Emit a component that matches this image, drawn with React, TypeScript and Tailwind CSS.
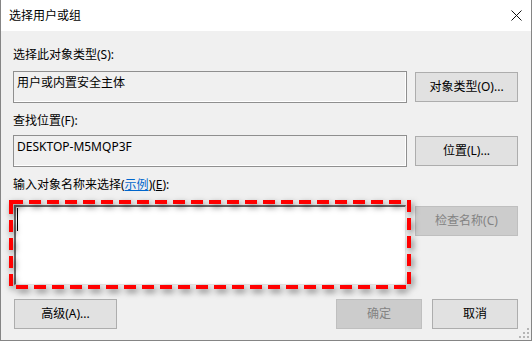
import React from 'react';

const font = { fontFamily: '"Noto Sans", "Noto Sans CJK SC", sans-serif' };

const Button = ({ label, disabled, className = '' }: { label: React.ReactNode; disabled?: boolean; className?: string }) => (
  <div
    className={`h-[30px] flex items-center justify-center text-[12px] border ${
      disabled ? 'bg-[#cccccc] border-[#bfbfbf] text-[#838383]' : 'bg-[#e1e1e1] border-[#adadad] text-[#000000]'
    } ${className}`}
  >
    {label}
  </div>
);

const ReadOnlyBox = ({ value }: { value: string }) => (
  <div className="flex-1 h-[32px] border border-[#8f8f8f] shadow-[inset_-1px_-1px_0_#ffffff] bg-[#f0f0f0] px-[3px] pt-[3px] text-[12px] leading-[16px] text-black">
    {value}
  </div>
);

export default function App() {
  return (
    <div className="w-[532px] h-[342px] bg-white" style={font}>
      <div className="w-[532px] h-[341px] border-x border-b border-[#858585] bg-[#f0f0f0] flex flex-col relative">
        {/* Title bar */}
        <div className="h-[31px] bg-white flex items-center justify-between pl-[8px] pr-[9px]">
          <span className="text-[12px] text-black">选择用户或组</span>
          <svg width="11" height="11" viewBox="0 0 11 11">
            <path d="M0.5 0.5 L10.5 10.5 M10.5 0.5 L0.5 10.5" stroke="#111" strokeWidth="1" />
          </svg>
        </div>

        <div className="flex flex-col pl-[12px] pr-[13px] text-[12px] leading-[16px] text-black">
          <div className="mt-[16px]">选择此对象类型(S):</div>
          <div className="mt-[8px] flex gap-[8px]">
            <ReadOnlyBox value="用户或内置安全主体" />
            <Button label="对象类型(O)..." className="w-[103px] mt-[1px]" />
          </div>

          <div className="mt-[10px]">查找位置(F):</div>
          <div className="mt-[6px] flex gap-[8px]">
            <ReadOnlyBox value="DESKTOP-M5MQP3F" />
            <Button label="位置(L)..." className="w-[103px] mt-[1px]" />
          </div>

          <div className="mt-[10px]">
            输入对象名称来选择(<span className="text-[#0066cc] underline">示例</span>)(<span className="underline">E</span>):
          </div>
          <div className="mt-[12px] flex gap-[9px]">
            <div className="relative flex-1">
              <div className="h-[80px] ml-[1px] bg-white border-t-2 border-l-2 border-[#6d6d6d] border-r border-b border-r-[#e6e6e6] border-b-[#e6e6e6] pl-[1px] pt-[1px]">
                <div className="w-[1px] h-[23px] bg-black" />
              </div>
              {/* highlight annotation */}
              <svg
                className="absolute left-[-4px] top-[-5px] drop-shadow-[2px_3px_3px_rgba(0,0,0,0.55)]"
                width="403"
                height="90"
                viewBox="0 0 403 90"
              >
                <rect x="2" y="2" width="398" height="85" fill="none" stroke="#ff0000" strokeWidth="4" strokeDasharray="12 6" />
              </svg>
            </div>
            <Button label="检查名称(C)" disabled className="w-[103px] mt-[1px]" />
          </div>

          <div className="mt-[14px] flex">
            <Button label="高级(A)..." className="w-[103px] ml-[1px]" />
            <div className="flex-1" />
            <Button label="确定" disabled className="w-[86px]" />
            <Button label="取消" className="w-[86px] ml-[10px]" />
          </div>
        </div>

        {/* resize grip */}
        <svg className="absolute right-[1px] bottom-[1px]" width="11" height="11" viewBox="0 0 11 11">
          <rect x="8" y="0" width="2" height="2" fill="#b5b5b5" />
          <rect x="4" y="4" width="2" height="2" fill="#b5b5b5" />
          <rect x="8" y="4" width="2" height="2" fill="#b5b5b5" />
          <rect x="0" y="8" width="2" height="2" fill="#b5b5b5" />
          <rect x="4" y="8" width="2" height="2" fill="#b5b5b5" />
          <rect x="8" y="8" width="2" height="2" fill="#b5b5b5" />
        </svg>
      </div>
    </div>
  );
}
